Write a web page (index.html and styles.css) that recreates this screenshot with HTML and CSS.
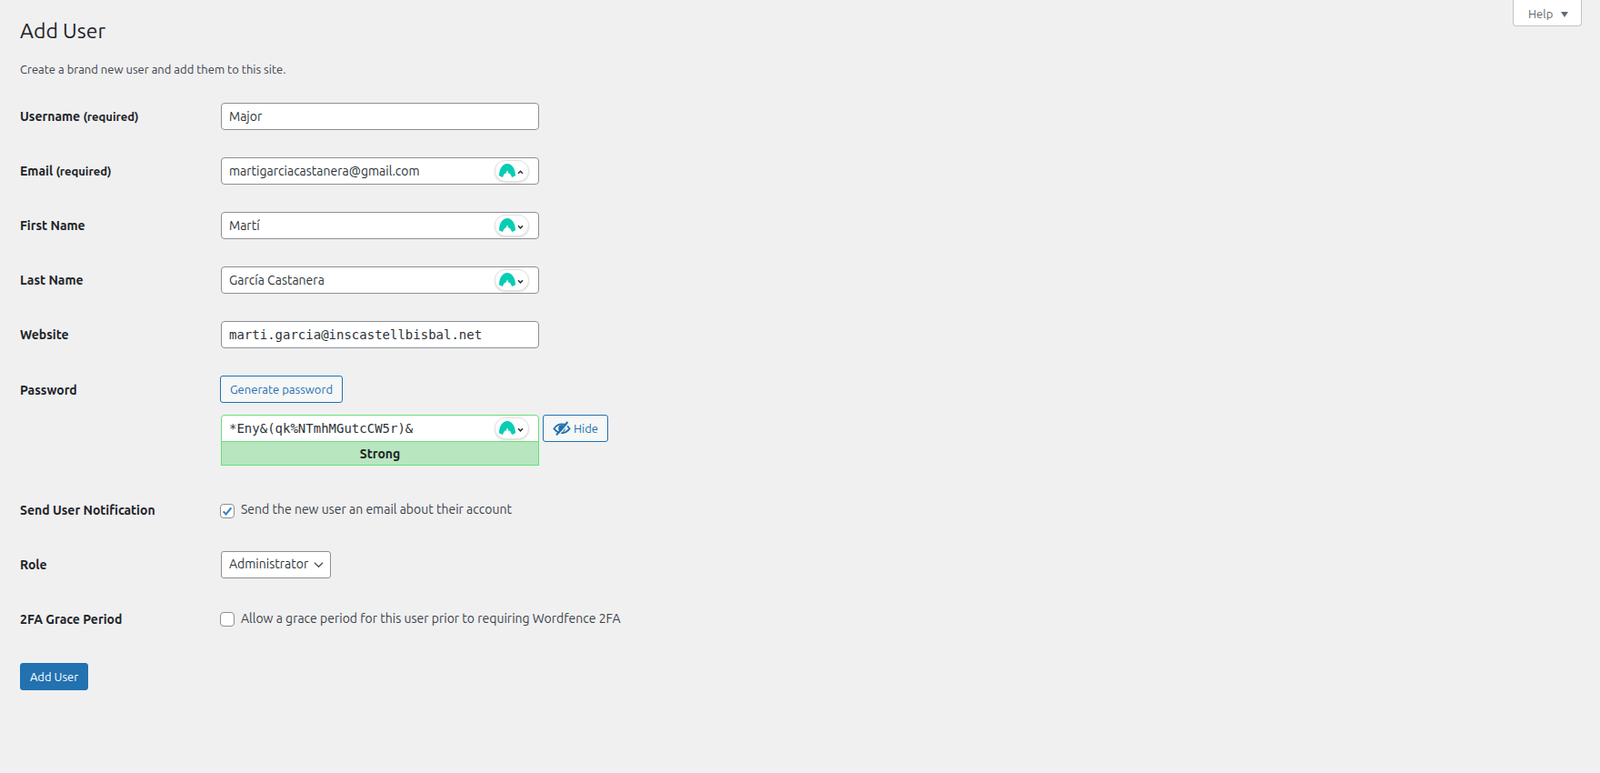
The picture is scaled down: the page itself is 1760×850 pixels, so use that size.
FILE: index.html
```html
<!DOCTYPE html>
<html lang="en">
<head>
  <meta charset="UTF-8">
  <title>Add User</title>
  <link rel="stylesheet" href="styles.css">
</head>
<body>
  <svg class="sprite" width="0" height="0" aria-hidden="true">
    <symbol id="nordDome" viewBox="0 0 18 15">
      <path d="M0 13.200C0 5.500 3.900 0 9 0s9 5.500 9 13.200L14.200 15 11.800 10.400l-.9 1.200L9 7.200l-1.900 4.400-.9-1.200L3.800 15z"/>
    </symbol>
  </svg>

  <div class="help-bar">
    <button class="help-tab" type="button">Help <span class="help-arrow"></span></button>
  </div>

  <div class="wrap">
    <h1>Add User</h1>
    <p class="intro">Create a brand new user and add them to this site.</p>

    <form>
      <table class="form-table">
        <tr>
          <th><label for="user_login">Username <span class="req">(required)</span></label></th>
          <td><div class="field"><input class="regular-text" type="text" id="user_login" value="Major"></div></td>
        </tr>
        <tr>
          <th><label for="email">Email <span class="req">(required)</span></label></th>
          <td>
            <div class="field">
              <input class="regular-text" type="text" id="email" value="martigarciacastanera@gmail.com">
              <span class="nord-pill">
                <svg class="nord-logo"><use href="#nordDome"/></svg>
                <svg class="nord-chev" viewBox="0 0 8 6"><path d="M1 4.600 4 1.600l3 3"/></svg>
              </span>
            </div>
          </td>
        </tr>
        <tr>
          <th><label for="first_name">First Name</label></th>
          <td>
            <div class="field">
              <input class="regular-text" type="text" id="first_name" value="Martí">
              <span class="nord-pill">
                <svg class="nord-logo"><use href="#nordDome"/></svg>
                <svg class="nord-chev" viewBox="0 0 8 6"><path d="M1 1.600 4 4.600l3-3"/></svg>
              </span>
            </div>
          </td>
        </tr>
        <tr>
          <th><label for="last_name">Last Name</label></th>
          <td>
            <div class="field">
              <input class="regular-text" type="text" id="last_name" value="García Castanera">
              <span class="nord-pill">
                <svg class="nord-logo"><use href="#nordDome"/></svg>
                <svg class="nord-chev" viewBox="0 0 8 6"><path d="M1 1.600 4 4.600l3-3"/></svg>
              </span>
            </div>
          </td>
        </tr>
        <tr>
          <th><label for="url">Website</label></th>
          <td><div class="field"><input class="regular-text code" type="text" id="url" value="marti.garcia@inscastellbisbal.net"></div></td>
        </tr>
        <tr class="pass-row">
          <th><label for="pass1">Password</label></th>
          <td>
            <button class="button gen-btn" type="button">Generate password</button>
            <div class="pass-wrap">
              <div class="pass-col">
                <div class="field">
                  <input class="regular-text code strong" type="text" id="pass1" value="*Eny&amp;(qk%NTmhMGutcCW5r)&amp;">
                  <span class="nord-pill">
                    <svg class="nord-logo"><use href="#nordDome"/></svg>
                    <svg class="nord-chev" viewBox="0 0 8 6"><path d="M1 1.600 4 4.600l3-3"/></svg>
                  </span>
                </div>
                <div class="strength">Strong</div>
              </div>
              <button class="button hide-btn" type="button">
                <svg class="eye" viewBox="0 0 20 20">
                  <path class="eye-outline" d="M1.400 10.400C3.600 7.200 6.600 5.400 10 5.400s6.400 1.800 8.600 5c-2.200 3-5.200 4.600-8.600 4.600s-6.400-1.600-8.600-4.600z"/>
                  <circle class="eye-pupil" cx="10" cy="10" r="3.800"/>
                  <path class="eye-gap" d="M17.800 4.200 5.400 18.600"/>
                  <path class="eye-slash" d="M16.400 3 4 17.400"/>
                </svg>
                Hide
              </button>
            </div>
          </td>
        </tr>
        <tr class="check-row">
          <th>Send User Notification</th>
          <td>
            <label class="check-label"><input class="check" type="checkbox" checked> Send the new user an email about their account</label>
          </td>
        </tr>
        <tr>
          <th><label for="role">Role</label></th>
          <td>
            <select class="role" id="role">
              <option>Administrator</option>
            </select>
          </td>
        </tr>
        <tr class="check-row">
          <th>2FA Grace Period</th>
          <td>
            <label class="check-label"><input class="check" type="checkbox"> Allow a grace period for this user prior to requiring Wordfence 2FA</label>
          </td>
        </tr>
      </table>
      <p class="submit"><button class="button button-primary" type="button">Add User</button></p>
    </form>
  </div>
</body>
</html>
```

FILE: styles.css
```css
:root {
  --primary: #2271b1;
  --text: #3c434a;
  --text-dark: #1d2327;
  --border: #8c8f94;
  --strong: #68de7c;
  --teal: #06cdb3;
}

html, body {
  margin: 0;
  height: 100%;
}

body {
  background: #f0f0f1;
  color: var(--text);
  font-family: Ubuntu, "Noto Sans", sans-serif;
  font-size: 13px;
  line-height: 1.4;
  overflow: hidden;
}

.sprite {
  display: block;
}

.help-bar {
  display: flex;
  justify-content: flex-end;
  padding-right: 20px;
  height: 0;
}

.help-tab {
  display: flex;
  align-items: center;
  gap: 9px;
  height: 29px;
  width: 76px;
  padding: 3px 0 0 16px;
  background: #fff;
  border: 1px solid #c3c4c7;
  border-top: none;
  border-radius: 0 0 4px 4px;
  color: #646970;
  font: inherit;
}

.help-arrow {
  width: 0;
  height: 0;
  border-left: 4.5px solid transparent;
  border-right: 4.5px solid transparent;
  border-top: 6px solid #646970;
}

.wrap {
  padding: 0 0 0 22px;
}

h1 {
  margin: 0;
  padding: 18px 0 0;
  font-size: 23px;
  font-weight: 400;
  line-height: 31px;
  color: var(--text-dark);
}

.intro {
  margin: 18px 0 0;
  line-height: 19px;
}

.form-table {
  border-collapse: collapse;
  margin-top: 12px;
}

.form-table th {
  width: 200px;
  padding: 2px 20px 0 0;
  text-align: left;
  vertical-align: middle;
  font-size: 14px;
  font-weight: 600;
  color: var(--text-dark);
}

.form-table td {
  padding: 15px 10px 15px 0;
  vertical-align: middle;
  font-size: 14px;
}

.req {
  font-size: 13px;
}

.regular-text {
  display: block;
  box-sizing: border-box;
  width: 350px;
  height: 30px;
  padding: 0 8px;
  background: #fff;
  border: 1px solid var(--border);
  border-radius: 4px;
  color: #2c3338;
  font-family: inherit;
  font-size: 14px;
}

.code {
  font-family: "DejaVu Sans Mono", monospace;
}

.field {
  position: relative;
  width: 350px;
  margin-left: 1px;
}

.nord-pill {
  position: absolute;
  top: 3px;
  right: 11px;
  box-sizing: border-box;
  display: flex;
  align-items: center;
  width: 38px;
  height: 24px;
  padding-left: 4px;
  background: #fff;
  border: 1px solid #e2e2e2;
  border-radius: 12px;
  box-shadow: 0 1px 2px rgba(0, 0, 0, 0.15);
}

.nord-logo {
  width: 18px;
  height: 15px;
  margin-top: -2px;
  fill: var(--teal);
}

.nord-chev {
  width: 7px;
  height: 5px;
  margin: 2px 0 0 2px;
  fill: none;
  stroke: #2c3338;
  stroke-width: 1.8;
}

.button {
  box-sizing: border-box;
  height: 30px;
  padding: 0 10px;
  background: #f6f7f7;
  border: 1px solid var(--primary);
  border-radius: 3px;
  color: var(--primary);
  font: inherit;
  font-size: 13px;
}

.gen-btn {
  display: block;
}

.pass-row td {
  padding-bottom: 19px;
  vertical-align: top;
}

.pass-row th {
  vertical-align: top;
  padding-top: 22px;
}

.pass-wrap {
  display: flex;
  align-items: flex-start;
  gap: 4px;
  margin-top: 13px;
}

.pass-col {
  width: 351px;
}

.regular-text.strong {
  border-color: var(--strong);
  border-radius: 4px 4px 0 0;
}

.strength {
  box-sizing: border-box;
  width: 350px;
  height: 27px;
  margin: -1px 0 0 1px;
  background: #b8e6bf;
  border: 1px solid var(--strong);
  color: var(--text-dark);
  font-size: 14px;
  font-weight: 600;
  line-height: 26px;
  text-align: center;
}

.hide-btn {
  display: flex;
  align-items: center;
  justify-content: center;
  gap: 3px;
  width: 72px;
  padding: 0;
}

.eye {
  width: 20px;
  height: 20px;
}

.eye-outline {
  fill: none;
  stroke: var(--primary);
  stroke-width: 1.8;
}

.eye-pupil {
  fill: var(--primary);
}

.eye-gap {
  fill: none;
  stroke: #f6f7f7;
  stroke-width: 1.4;
}

.eye-slash {
  fill: none;
  stroke: var(--primary);
  stroke-width: 2.2;
}

.check-label {
  display: flex;
  align-items: center;
  gap: 6px;
  font-size: 14px;
}

.check {
  appearance: none;
  box-sizing: border-box;
  flex: none;
  width: 16px;
  height: 16px;
  margin: 2px 1px 0 0;
  background: #fff;
  border: 1px solid var(--border);
  border-radius: 4px;
}

.check:checked {
  background: #fff url("data:image/svg+xml;utf8,<svg xmlns='http://www.w3.org/2000/svg' viewBox='0 0 16 16'><path d='M3 8.400 6.400 12 13 3.800' fill='none' stroke='%233582c4' stroke-width='2.400'/></svg>") center no-repeat;
}

.check-row td {
  padding: 20px 10px 20px 0;
}

.role {
  appearance: none;
  box-sizing: border-box;
  display: block;
  width: 121px;
  height: 30px;
  margin-left: 1px;
  padding: 0 20px 0 8px;
  background: #fff url("data:image/svg+xml;utf8,<svg xmlns='http://www.w3.org/2000/svg' viewBox='0 0 12 8'><path d='M1 1.500 6 6.500l5-5' fill='none' stroke='%2350575e' stroke-width='1.500'/></svg>") right 7px center / 11px 8px no-repeat;
  border: 1px solid var(--border);
  border-radius: 3px;
  color: #2c3338;
  font: inherit;
  font-size: 14px;
}

.submit {
  margin: 19px 0 0;
}

.button-primary {
  width: 75px;
  padding: 0;
  background: var(--primary);
  color: #fff;
}
```
